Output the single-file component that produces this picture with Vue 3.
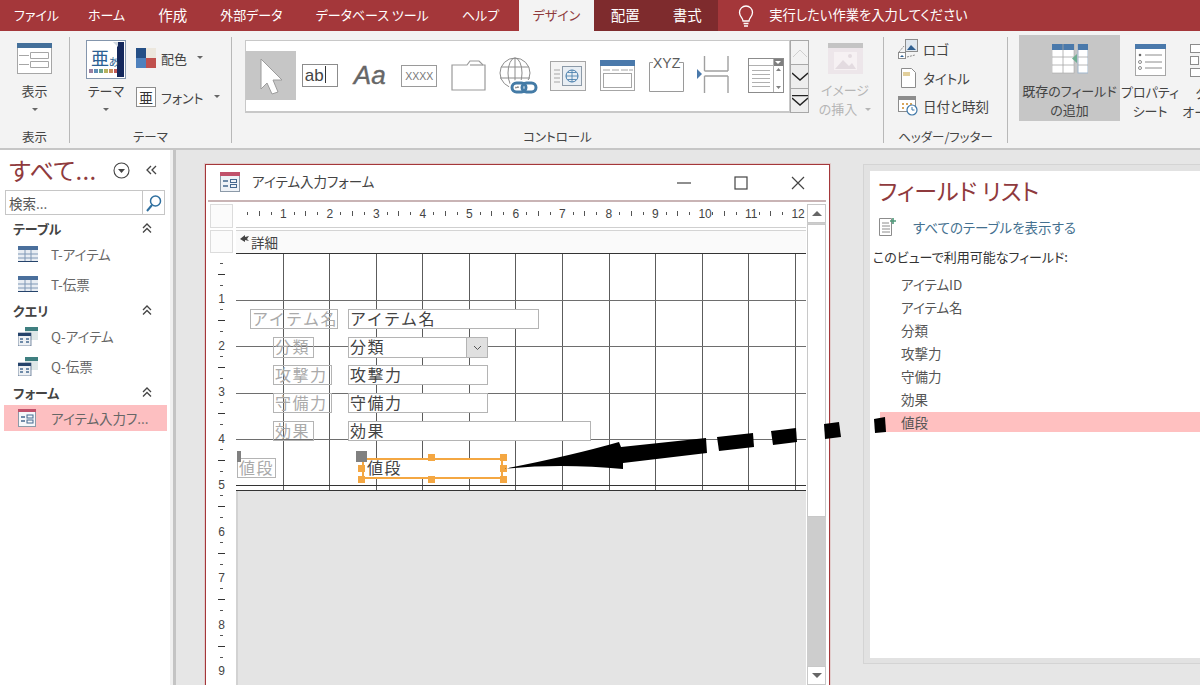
<script setup>
const tabs = ["ファイル", "ホーム", "作成", "外部データ", "データベース ツール", "ヘルプ"];
const contextTabs = ["配置", "書式"];

const navGroups = [
  { title: "テーブル", type: "table", items: ["T-アイテム", "T-伝票"] },
  { title: "クエリ", type: "query", items: ["Q-アイテム", "Q-伝票"] },
  { title: "フォーム", type: "form", items: ["アイテム入力フ..."] },
];

const fields = ["アイテムID", "アイテム名", "分類", "攻撃力", "守備力", "効果", "値段"];

const rulerCols = [1, 2, 3, 4, 5, 6, 7, 8, 9, 10, 11, 12];
const rulerRows = [1, 2, 3, 4, 5, 6, 7, 8, 9];

// design grid, origin is the top left corner of the detail section
const gridX = [47, 93, 140, 186, 233, 279, 326, 373, 419, 466, 512, 559];
const gridY = [47, 93, 140, 186];

const labels = [
  { text: "アイテム名", x: 14, y: 56, w: 88, h: 20 },
  { text: "分類", x: 37, y: 84, w: 41, h: 21 },
  { text: "攻撃力", x: 37, y: 112, w: 59, h: 20 },
  { text: "守備力", x: 37, y: 140, w: 59, h: 20 },
  { text: "効果", x: 37, y: 168, w: 41, h: 20 },
  { text: "値段", x: 1, y: 205, w: 39, h: 20 },
];
const inputs = [
  { text: "アイテム名", x: 112, y: 56, w: 191, h: 20 },
  { text: "分類", x: 112, y: 84, w: 140, h: 21, combo: true },
  { text: "攻撃力", x: 112, y: 112, w: 140, h: 20 },
  { text: "守備力", x: 112, y: 140, w: 140, h: 20 },
  { text: "効果", x: 112, y: 168, w: 243, h: 20 },
];
const handles = [
  [125, 215], [195, 204], [267, 204], [267, 215], [125, 226], [195, 226], [267, 226],
];

function box(c) {
  return { left: c.x + "px", top: c.y + "px", width: c.w + "px", height: c.h + "px" };
}
</script>

<template>
  <div class="app">
    <!-- tabs -->
    <div class="tabbar">
      <div v-for="t in tabs" :key="t" class="tab" :class="{ kanji: t === '作成' }">{{ t }}</div>
      <div class="tab active">デザイン</div>
      <div class="context-tabs">
        <div v-for="t in contextTabs" :key="t" class="tab kanji">{{ t }}</div>
      </div>
      <svg class="bulb" width="18" height="23" viewBox="0 0 18 23" fill="none" stroke="#fff" stroke-width="1.3">
        <path d="M6 16c0-3-3.500-4.500-3.500-8.500a6.500 6.500 0 0 1 13 0C15.500 11.500 12 13 12 16z" />
        <path d="M6.500 18.500h5M7 21h4" />
      </svg>
      <div class="tell-me">実行したい作業を入力してください</div>
    </div>

    <!-- ribbon -->
    <div class="ribbon">
      <div class="group g-view">
        <div class="group-body big-btn">
          <svg class="big-icon" width="35" height="31" viewBox="0 0 35 31">
            <rect x=".5" y=".5" width="34" height="30" fill="#fff" stroke="#a6a6a6" />
            <rect width="35" height="5" fill="#44709a" />
            <path d="M13.500 9.500h18v6h-18zM13.500 18.500h18v6h-18z" fill="none" stroke="#a6a6a6" />
            <path d="M2 12.500h10M2 21.500h10" stroke="#a6a6a6" />
          </svg>
          <div class="big-text">表示</div>
          <div class="caret"></div>
        </div>
        <div class="group-label">表示</div>
      </div>

      <div class="group g-theme">
        <div class="group-body theme-body">
          <div class="big-btn theme-btn">
            <svg class="theme-icon" width="40" height="39" viewBox="0 0 40 39">
              <rect x=".5" y=".5" width="39" height="38" fill="#fff" stroke="#8496ad" />
              <rect x="31" y="2" width="7" height="35" fill="#14285c" />
              <path d="M27 2h5v5z" fill="#d0d8e0" />
              <text x="5" y="25" class="svg-ja" font-size="18" fill="#2c5f93">亜</text>
              <text x="23" y="26" class="svg-ja" font-size="10" fill="#2c5f93">あ</text>
              <rect x="3" y="29" width="4" height="4" fill="#9a7fa0" />
              <rect x="8" y="29" width="4" height="4" fill="#5f8fb8" />
              <rect x="13" y="29" width="4" height="4" fill="#6aa38b" />
              <rect x="18" y="29" width="4" height="4" fill="#b7b35f" />
              <rect x="23" y="29" width="4" height="4" fill="#c98a5a" />
              <rect x="28" y="29" width="3" height="4" fill="#c05a5a" />
            </svg>
            <div class="big-text">テーマ</div>
            <div class="caret"></div>
          </div>
          <div class="theme-side">
            <div class="side-row">
              <svg width="20" height="20" viewBox="0 0 20 20">
                <rect width="10" height="10" fill="#254f86" />
                <rect x="10" width="10" height="10" fill="#ece7dd" />
                <rect y="10" width="10" height="10" fill="#4f81bd" />
                <rect x="10" y="10" width="10" height="10" fill="#c0504d" />
              </svg>
              <span>配色</span><i class="caret small"></i>
            </div>
            <div class="side-row">
              <span class="font-box">亜</span>
              <span>フォント</span><i class="caret small"></i>
            </div>
          </div>
        </div>
        <div class="group-label">テーマ</div>
      </div>

      <div class="group g-controls">
        <div class="group-body controls-body">
          <div class="gallery">
            <div class="cell selected">
              <svg width="24" height="38" viewBox="0 0 24 38">
                <path d="M2 2l21 21h-9l5 12-6 2-5-11-6 6z" fill="#fff" stroke="#9c9c9c" />
              </svg>
            </div>
            <div class="cell">
              <span class="abl">ab<i></i></span>
            </div>
            <div class="cell"><span class="aa">A<em>a</em></span></div>
            <div class="cell"><span class="xxxx">XXXX</span></div>
            <div class="cell">
              <svg width="35" height="31" viewBox="0 0 35 31" fill="#fff" stroke="#9a9a9a" stroke-width="1.200">
                <path d="M1 30V5h15l3-4h9l4 4h2v25z" />
                <path d="M19 5h13" />
              </svg>
            </div>
            <div class="cell">
              <svg width="40" height="38" viewBox="0 0 40 38" fill="none">
                <g stroke="#8c8c8c">
                  <circle cx="17" cy="16" r="15" />
                  <ellipse cx="17" cy="16" rx="7" ry="15" />
                  <path d="M3 10h28M2 21h30M17 1v30" />
                </g>
                <g stroke="#fff" stroke-width="6">
                  <rect x="14" y="26" width="14" height="9" rx="4.500" />
                  <rect x="24" y="26" width="14" height="9" rx="4.500" />
                </g>
                <g stroke="#447ba6" stroke-width="3">
                  <rect x="14" y="26" width="14" height="9" rx="4.500" />
                  <rect x="24" y="26" width="14" height="9" rx="4.500" />
                </g>
              </svg>
            </div>
            <div class="cell">
              <svg width="36" height="30" viewBox="0 0 36 30" fill="none">
                <rect x=".5" y=".5" width="35" height="29" fill="#f4f4f4" stroke="#a6a6a6" />
                <path d="M4 9h6M4 13h6M4 17h6M4 21h6" stroke="#a6a6a6" />
                <rect x="12.500" y="5.500" width="19" height="19" fill="#e8eef4" stroke="#8c9aa8" />
                <circle cx="22" cy="15" r="6" stroke="#3f78a8" />
                <path d="M16 15h12M22 9v12M18 11.500h8M18 18.500h8" stroke="#3f78a8" stroke-width=".8" />
              </svg>
            </div>
            <div class="cell">
              <svg width="35" height="31" viewBox="0 0 35 31" fill="none">
                <rect x=".5" y=".5" width="34" height="30" fill="#fff" stroke="#a6a6a6" />
                <rect width="35" height="6" fill="#4a79ab" />
                <path d="M3 10h7M12 10h7M21 10h7M29 10h4" stroke="#a6a6a6" />
                <rect x="3.500" y="13.500" width="28" height="14" stroke="#a6a6a6" />
              </svg>
            </div>
            <div class="cell">
              <svg class="xyz" width="35" height="36" viewBox="0 0 35 36" fill="none">
                <path d="M4 6.500H.5v29h34v-29H30" stroke="#9a9a9a" />
                <text x="4" y="12" class="svg-sans" font-size="14" fill="#5c5c5c">XYZ</text>
              </svg>
            </div>
            <div class="cell">
              <svg class="split" width="32" height="37" viewBox="0 0 32 37" fill="none">
                <path d="M6 14l5 5-5 5z" fill="#4a79ab" transform="translate(-6 -1)" />
                <path d="M7.500 0v15M31 0v15M7.500 15H31M7.500 37V20M31 37V20M7.500 20H31" stroke="#a0a0a0" stroke-width="1.400" />
              </svg>
            </div>
            <div class="cell">
              <svg width="36" height="35" viewBox="0 0 36 35" fill="none">
                <rect x=".5" y=".5" width="35" height="34" fill="#fff" stroke="#8c8c8c" />
                <rect x="25" y="1" width="10" height="7" fill="#7f7f7f" />
                <path d="M27 3h6l-3 3z" fill="#fff" />
                <path d="M25.500 1v33M1 7.500h24M4 12.500h18M4 16.500h18M4 20.500h18M4 24.500h18M4 28.500h18" stroke="#b0b0b0" />
                <path d="M28 13h5l-2.500-3zM28 28h5l-2.500 3z" fill="#7f7f7f" />
              </svg>
            </div>
          </div>
          <div class="gallery-scroll">
            <div class="gs-btn disabled">
              <svg width="14" height="8" viewBox="0 0 14 8" fill="none" stroke="#d0d0d0"><path d="M0 8l7-7 7 7" /></svg>
            </div>
            <div class="gs-btn">
              <svg width="16" height="9" viewBox="0 0 16 9" fill="none" stroke="#222" stroke-width="1.400"><path d="M0 1l8 7 8-7" /></svg>
            </div>
            <div class="gs-btn">
              <svg width="16" height="11" viewBox="0 0 16 11" fill="none" stroke="#222" stroke-width="1.400"><path d="M0 .5h16M0 3l8 7 8-7" /></svg>
            </div>
          </div>
          <div class="insert-image">
            <svg width="35" height="31" viewBox="0 0 35 31">
              <rect width="35" height="31" fill="#ede6ea" />
              <rect width="35" height="5" fill="#c4c4c4" />
              <rect x="6" y="9" width="23" height="18" fill="#f6f1f3" />
              <path d="M7 26l8-9 6 6 3-3 4 6z" fill="#e3dbe0" />
              <circle cx="22" cy="13" r="2" fill="#e3dbe0" />
            </svg>
            <div class="insert-text">イメージ</div>
            <div class="insert-text">の挿入 <i class="caret small pale"></i></div>
          </div>
        </div>
        <div class="group-label">コントロール</div>
      </div>

      <div class="group g-header">
        <div class="group-body header-body">
          <div class="head-row">
            <svg width="20" height="20" viewBox="0 0 20 20" fill="none">
              <path d="M1 13l5-6M9 18l8-2" stroke="#8c8c8c" stroke-dasharray="2 1" />
              <rect x="7.500" y=".5" width="12" height="12" fill="#dfe7ef" stroke="#8c8c8c" />
              <path d="M9 11l4-5 3 3 2 2z" fill="#2f5f90" />
              <rect x=".5" y="13.500" width="7" height="6" fill="#fff" stroke="#8c8c8c" />
              <path d="M2 18l2-2 2 2z" fill="#2f5f90" />
            </svg>
            <span>ロゴ</span>
          </div>
          <div class="head-row">
            <svg width="20" height="20" viewBox="0 0 20 20" fill="none">
              <path d="M3.500.5h10l4 4v15h-14z" fill="#fff" stroke="#8c8c8c" />
              <rect x="5" y="4" width="7" height="4" fill="#e2cf9b" />
            </svg>
            <span>タイトル</span>
          </div>
          <div class="head-row">
            <svg width="20" height="20" viewBox="0 0 20 20" fill="none">
              <rect x=".5" y=".5" width="17" height="15" fill="#fff" stroke="#8c8c8c" />
              <rect x="1" y="1" width="16" height="3" fill="#8c8c8c" />
              <path d="M4 7h2v2H4zM8 7h2v2H8zM12 7h2v2h-2zM4 11h2v2H4z" fill="#d8a55a" />
              <circle cx="14" cy="14" r="5" fill="#fff" stroke="#3f78a8" stroke-width="1.200" />
              <path d="M14 11v3h2.500" stroke="#3f78a8" />
            </svg>
            <span>日付と時刻</span>
          </div>
        </div>
        <div class="group-label">ヘッダー/フッター</div>
      </div>

      <div class="group g-tools">
        <div class="tool add-field">
          <svg width="36" height="30" viewBox="0 0 36 30">
            <rect x="0" y="0" width="22" height="29" fill="#fff" stroke="#a6a6a6" stroke-width=".6" />
            <rect width="22" height="6" fill="#4a79ab" />
            <path d="M0 13h22M0 21h22M11 0v29" stroke="#a6a6a6" stroke-width=".8" />
            <rect x="26" y="0" width="10" height="29" fill="#fff" stroke="#9fb6cc" />
            <rect x="26" width="10" height="6" fill="#4a79ab" />
            <path d="M26 13h10M26 21h10" stroke="#a6a6a6" stroke-width=".8" />
            <path d="M25 10v9l-5-4.500z" fill="#6fae92" />
          </svg>
          <div class="tool-text">既存のフィールド<br />の追加</div>
        </div>
        <div class="tool props">
          <svg width="31" height="32" viewBox="0 0 31 32" fill="none">
            <rect x=".5" y=".5" width="30" height="31" fill="#fff" stroke="#a6a6a6" />
            <rect width="31" height="5" fill="#4a79ab" />
            <path d="M10 11h17M10 18h17M10 24h17" stroke="#8c8c8c" />
            <circle cx="5" cy="11" r="1.300" fill="#666" />
            <circle cx="5" cy="18" r="1.500" stroke="#8c8c8c" />
            <circle cx="5" cy="24" r="1.500" stroke="#8c8c8c" />
          </svg>
          <div class="tool-text">プロパティ<br />シート</div>
        </div>
        <div class="tool order">
          <svg width="30" height="33" viewBox="0 0 30 33" fill="none" stroke="#8c8c8c">
            <rect x=".5" y=".5" width="29" height="8" fill="#fff" />
            <rect x=".5" y="12.500" width="8" height="8" fill="#fff" />
            <rect x=".5" y="24.500" width="29" height="8" fill="#fff" />
          </svg>
          <div class="tool-text">タブ<br />オーダー</div>
        </div>
      </div>
    </div>

    <div class="main">
      <!-- navigation pane -->
      <aside class="nav">
        <div class="nav-head">
          <span class="nav-title">すべて...</span>
          <svg class="nav-circle" width="17" height="17" viewBox="0 0 17 17" fill="none">
            <circle cx="8.500" cy="8.500" r="7.500" stroke="#444" stroke-width="1.100" />
            <path d="M5 7h7l-3.500 4z" fill="#444" />
          </svg>
          <svg class="nav-collapse" width="12" height="10" viewBox="0 0 12 10" fill="none" stroke="#444" stroke-width="1.300">
            <path d="M5 1L1 5l4 4M10 1L6 5l4 4" />
          </svg>
        </div>
        <div class="search">
          <span class="search-text">検索...</span>
          <div class="search-btn">
            <svg width="17" height="18" viewBox="0 0 17 18" fill="none" stroke="#2f6f9f" stroke-width="1.500">
              <circle cx="10.500" cy="7" r="5" />
              <path d="M7 11l-5 6" stroke-width="2" />
            </svg>
          </div>
        </div>
        <template v-for="g in navGroups" :key="g.title">
          <div class="nav-group">
            <span>{{ g.title }}</span>
            <svg width="10" height="10" viewBox="0 0 10 10" fill="none" stroke="#444" stroke-width="1.300">
              <path d="M1 5l4-4 4 4M1 9.500l4-4 4 4" />
            </svg>
          </div>
          <div v-for="item in g.items" :key="item" class="nav-item" :class="{ selected: g.type === 'form' }">
            <svg v-if="g.type === 'table'" width="20" height="16" viewBox="0 0 20 16">
              <rect width="20" height="16" fill="#e8edf3" />
              <rect width="20" height="4" fill="#4a6f9c" />
              <path d="M0 8h20M0 12h20M7 4v12M13 4v12" stroke="#7f97b5" />
              <rect y="15" width="20" height="1" fill="#25436b" />
            </svg>
            <svg v-else-if="g.type === 'query'" width="20" height="19" viewBox="0 0 20 19">
              <rect x="7" y="0" width="13" height="13" fill="#dfe8e8" />
              <rect x="7" y="0" width="13" height="4" fill="#3f7f80" />
              <rect x="0" y="6" width="13" height="13" fill="#eef1f4" stroke="#25436b" stroke-width=".6" />
              <rect x="0" y="6" width="13" height="3" fill="#25436b" />
              <path d="M2 12h3M8 12h3M2 15h3M8 15h3" stroke="#44688f" stroke-width="1.300" />
            </svg>
            <svg v-else width="18" height="18" viewBox="0 0 18 18" fill="none">
              <rect x=".5" y=".5" width="17" height="17" fill="#f5f7fa" stroke="#8c9aa8" />
              <rect width="18" height="3" fill="#c0506a" />
              <path d="M3 8h4M3 12h4" stroke="#44688f" stroke-width="1.300" />
              <rect x="9" y="6" width="6" height="3" stroke="#44688f" />
              <rect x="9" y="11" width="6" height="3" stroke="#44688f" />
            </svg>
            <span>{{ item }}</span>
          </div>
        </template>
      </aside>
      <div class="nav-split"></div>

      <div class="workspace">
        <!-- form window -->
        <section class="form-window">
          <header class="win-title">
            <svg width="20" height="20" viewBox="0 0 20 20" fill="none">
              <rect x=".5" y=".5" width="19" height="19" fill="#eef2f7" stroke="#8c9aa8" />
              <rect width="20" height="4" fill="#c0506a" />
              <path d="M3 9h5M3 14h5" stroke="#44688f" stroke-width="1.300" />
              <rect x="10.500" y="7.500" width="6" height="3" stroke="#44688f" />
              <rect x="10.500" y="12.500" width="6" height="3" stroke="#44688f" />
            </svg>
            <span class="win-name">アイテム入力フォーム</span>
            <div class="win-btns">
              <svg width="14" height="14" viewBox="0 0 14 14" stroke="#444" stroke-width="1.200"><path d="M0 7h14" /></svg>
              <svg width="14" height="14" viewBox="0 0 14 14" fill="none" stroke="#444" stroke-width="1.200"><rect x="1" y="1" width="12" height="12" /></svg>
              <svg width="14" height="14" viewBox="0 0 14 14" stroke="#444" stroke-width="1.200"><path d="M1 1l12 12M13 1L1 13" /></svg>
            </div>
          </header>

          <div class="designer">
            <div class="left-col">
              <div class="corner first"></div>
              <div class="corner"></div>
              <div class="v-ruler">
                <div v-for="r in rulerRows" :key="r" class="v-cell">
                  <i class="dot"></i><i class="dash"></i><i class="dot"></i><b>{{ r }}</b>
                </div>
              </div>
            </div>

            <div class="center-col">
              <div class="h-ruler">
                <div v-for="c in rulerCols" :key="c" class="h-cell">
                  <i class="tick"></i><i class="bar"></i><i class="tick"></i><b>{{ c }}</b>
                </div>
              </div>
              <div class="section-band">
                <svg width="10" height="8" viewBox="0 0 10 8"><path d="M0 4l5-4v2l4-1-2 3 2 2-4-1v2z" fill="#444" /></svg>
                <span>詳細</span>
              </div>

              <!-- design surface, the controls sit on free coordinates -->
              <div class="surface">
                <svg class="grid-lines" width="570" height="238" viewBox="0 0 570 238">
                  <path v-for="x in gridX" :key="x" :d="`M${x + 0.5} 0V238`" stroke="#5c5c5c" />
                  <path v-for="y in gridY" :key="y" :d="`M0 ${y + 0.5}H570`" stroke="#6e6e6e" />
                  <path d="M0 .5H570M0 232.500H570M0 237.500H570" stroke="#333" />
                </svg>
                <div v-for="l in labels" :key="'l' + l.text" class="ctl label" :style="box(l)">{{ l.text }}</div>
                <div v-for="i in inputs" :key="'i' + i.text" class="ctl input" :style="box(i)">
                  {{ i.text }}
                  <span v-if="i.combo" class="combo-btn">
                    <svg width="9" height="6" viewBox="0 0 9 6" fill="none" stroke="#555"><path d="M1 1l3.500 3.500L8 1" /></svg>
                  </span>
                </div>
                <div class="ctl picked">値段</div>
                <i class="grab big"></i>
                <i class="grab thin"></i>
                <i v-for="h in handles" :key="h.join()" class="handle" :style="{ left: h[0] - 3 + 'px', top: h[1] - 3 + 'px' }"></i>
              </div>
              <div class="below"></div>
            </div>

            <div class="v-scroll">
              <div class="sb-btn"><i class="up"></i></div>
              <div class="sb-thumb"></div>
              <div class="sb-track"></div>
              <div class="sb-btn down"><i class="dn"></i></div>
            </div>
          </div>
        </section>

        <!-- field list -->
        <section class="field-list">
          <h2>フィールド リスト</h2>
          <div class="show-all">
            <svg width="18" height="18" viewBox="0 0 18 18" fill="none">
              <path d="M.5.5h12v17H.5z" fill="#fff" stroke="#8c8c8c" />
              <path d="M3 5h7M3 8h8M3 11h8M3 14h8" stroke="#8c8c8c" />
              <path d="M14 0v6M11 3h6" stroke="#4f9a7a" stroke-width="1.600" />
            </svg>
            <span>すべてのテーブルを表示する</span>
          </div>
          <div class="avail">このビューで利用可能なフィールド:</div>
          <ul>
            <li v-for="f in fields" :key="f" :class="{ hit: f === '値段' }">{{ f }}</li>
          </ul>
        </section>
      </div>
    </div>

    <!-- hand drawn arrow laid over the screenshot -->
    <svg class="arrow" width="1200" height="685" viewBox="0 0 1200 685">
      <path d="M503 469Q570 456 619 442L621 447L706 438L707 453L623 463L623 469Q560 463 503 469z" />
      <path d="M717 437L753 433L754 447L719 451z" />
      <path d="M771 431L796 428L797 442L773 445z" />
      <path d="M824 424L839 422L841 437L825 439z" />
      <path d="M874 419L885 417L886 432L875 433z" />
    </svg>
  </div>
</template>

<style>
html,
body {
  margin: 0;
  overflow: hidden;
}
</style>

<style scoped>
.app {
  position: relative;
  width: 1200px;
  height: 685px;
  overflow: hidden;
  display: flex;
  flex-direction: column;
  background: #e6e6e6;
  color: #444;
  font-family: "Noto Sans CJK JP", "Noto Sans", sans-serif;
  font-size: 13px;
  font-feature-settings: "palt";
}

.svg-ja {
  font-family: "Noto Sans CJK JP", sans-serif;
}
.svg-sans {
  font-family: "Liberation Sans", sans-serif;
}

/* tabs */
.tabbar {
  flex: none;
  height: 31px;
  display: flex;
  align-items: stretch;
  background: #a4373a;
  color: #fff;
  font-size: 13px;
  line-height: 30px;
}
.tab {
  padding: 0 16.500px;
  white-space: nowrap;
}
.tab.kanji {
  font-size: 14.500px;
}
.tab:first-child {
  padding: 0 12.500px 0 14px;
}
.tab:nth-child(6) {
  padding-right: 19.500px;
}
.tab.active {
  background: #f3f3f3;
  color: #8f3a3d;
  padding: 0 14px;
}
.context-tabs {
  display: flex;
  background: #7e2b2d;
}
.context-tabs .tab:first-child {
  padding: 0 16.500px;
}
.bulb {
  margin: 2px 0 0 19px;
  align-self: center;
}
.tell-me {
  margin-left: 14px;
  font-size: 13.300px;
}

/* ribbon */
.ribbon {
  flex: none;
  height: 119px;
  box-sizing: border-box;
  display: flex;
  background: #f3f3f3;
  border-bottom: 2px solid #c6c6c6;
  padding-top: 6px;
}
.group {
  flex: none;
  height: 106px;
  display: flex;
  flex-direction: column;
  box-sizing: border-box;
  border-right: 1px solid #b8b8b8;
}
.group-body {
  flex: 1;
  min-height: 0;
}
.group-label {
  height: 12px;
  line-height: 12px;
  text-align: center;
  font-size: 12.500px;
  color: #444;
}
.g-view {
  width: 70px;
}
.g-theme {
  width: 162px;
}
.g-controls {
  width: 652px;
}
.g-header {
  width: 124px;
}
.g-tools {
  flex: 1;
  flex-direction: row;
  border: 0;
  margin-top: -2px;
  padding-left: 11px;
  height: 86px;
}

.big-btn {
  display: flex;
  flex-direction: column;
  align-items: center;
}
.g-view .big-icon {
  margin-top: 6px;
}
.big-text {
  line-height: 18px;
  margin-top: 8px;
}
.caret {
  width: 0;
  height: 0;
  border: 3px solid transparent;
  border-top-color: #666;
  border-bottom: 0;
  margin-top: 8px;
}
.caret.small {
  display: inline-block;
  margin: 0 0 2px 5px;
  vertical-align: middle;
}
.caret.pale {
  border-top-color: #b5b5b5;
}
.theme-body {
  display: flex;
}
.theme-btn {
  width: 40px;
  margin-left: 16px;
}
.theme-icon {
  margin-top: 3px;
}
.theme-btn .big-text {
  margin-top: 3px;
  white-space: nowrap;
}
.theme-side {
  margin-left: 10px;
  padding-top: 11px;
  display: flex;
  flex-direction: column;
  gap: 19px;
}
.side-row {
  height: 20px;
  display: flex;
  align-items: center;
  gap: 5px;
  white-space: nowrap;
}
.font-box {
  width: 18px;
  height: 18px;
  border: 1px solid #8c8c8c;
  background: #fff;
  display: flex;
  align-items: center;
  justify-content: center;
  font-size: 14px;
  color: #333;
}

.controls-body {
  display: flex;
  padding: 3px 0 0 13px;
  box-sizing: border-box;
}
.gallery {
  width: 545px;
  height: 73px;
  box-sizing: border-box;
  border: 1px solid #c8c8c8;
  border-width: 1px 1px 2px 1px;
  background: #fff;
  display: flex;
  align-items: center;
  padding-bottom: 1px;
}
.cell {
  flex: none;
  width: 49.500px;
  height: 49px;
  display: flex;
  align-items: center;
  justify-content: center;
}
.cell.selected {
  background: #c6c6c6;
}
.abl {
  display: block;
  width: 32px;
  height: 21px;
  margin-left: -1px;
  padding-left: 2px;
  border: 1px solid #8c8c8c;
  font-family: "Liberation Sans", sans-serif;
  font-size: 17px;
  line-height: 21px;
  color: #444;
}
.abl i {
  display: inline-block;
  width: 1px;
  height: 17px;
  margin-left: 1px;
  background: #333;
  vertical-align: -2px;
}
.aa {
  font-family: "Liberation Sans", sans-serif;
  font-style: italic;
  font-size: 26px;
  color: #666;
  -webkit-text-stroke: 0.4px #666;
}
.aa em {
  font-style: italic;
}
.xxxx {
  width: 34px;
  height: 20px;
  border: 1px solid #9a9a9a;
  font-family: "Liberation Sans", sans-serif;
  font-size: 10.500px;
  line-height: 20px;
  text-align: center;
  color: #777;
}
.xyz {
  margin-top: -3px;
}
.split {
  margin: -3px 0 0 -6px;
}
.gallery-scroll {
  width: 19px;
  height: 73px;
  display: flex;
  flex-direction: column;
  box-sizing: border-box;
  border: 1px solid #a8a8a8;
  background: #ededed;
}
.gallery-scroll .gs-btn {
  flex: 1;
  display: flex;
  align-items: center;
  justify-content: center;
  border-bottom: 1px solid #a8a8a8;
}
.gallery-scroll .gs-btn:last-child {
  border-bottom: 0;
}
.gs-btn.disabled {
  background: #f3f3f3;
}
.insert-image {
  width: 52px;
  margin-top: 3px;
  margin-left: 10px;
  display: flex;
  flex-direction: column;
  align-items: center;
  color: #b5b5b5;
  white-space: nowrap;
}
.insert-text {
  line-height: 19px;
}
.insert-image svg {
  margin-bottom: 6px;
}
.header-body {
  padding: 2px 0 0 14px;
  display: flex;
  flex-direction: column;
  gap: 8.500px;
}
.head-row {
  height: 20px;
  display: flex;
  align-items: center;
  gap: 5px;
  font-size: 13.500px;
  white-space: nowrap;
}
.tool {
  flex: none;
  display: flex;
  flex-direction: column;
  align-items: center;
  white-space: nowrap;
  box-sizing: border-box;
  padding-top: 9px;
  height: 86px;
}
.tool-text {
  margin-top: 6px;
  line-height: 19px;
  text-align: center;
  font-size: 13px;
}
.add-field {
  width: 101px;
  background: #c6c6c6;
}
.add-field .tool-text {
  margin-top: 7px;
}
.props {
  width: 60px;
}
.order {
  margin-left: 2px;
  width: 50px;
}
.order svg {
  align-self: flex-start;
  margin-left: 8px;
}

/* navigation */
.main {
  flex: 1;
  min-height: 0;
  display: flex;
}
.nav {
  flex: none;
  width: 170px;
  background: #fff;
  padding: 0 3px 0 5px;
  box-sizing: border-box;
}
.nav-split {
  flex: none;
  width: 6px;
  box-sizing: border-box;
  background: #f0f0f0;
  border-right: 3px solid #c4c4c4;
}
.nav-head {
  height: 40px;
  display: flex;
  align-items: center;
}
.nav-title {
  margin-left: 4px;
  font-size: 24px;
  line-height: 36px;
  letter-spacing: 0.300px;
  color: #8f3a3d;
  width: 104px;
  white-space: nowrap;
}
.nav-collapse {
  margin-left: 16px;
}
.search {
  height: 25px;
  width: 160px;
  margin-bottom: 2px;
  box-sizing: border-box;
  border: 1px solid #c6c6c6;
  display: flex;
  align-items: center;
  font-size: 13.500px;
  color: #555;
}
.search-text {
  flex: 1;
  padding-left: 3px;
}
.search-btn {
  width: 21px;
  height: 23px;
  border-left: 1px solid #c6c6c6;
  display: flex;
  align-items: center;
  justify-content: center;
}
.nav-group {
  width: 160px;
  height: 22px;
  display: flex;
  align-items: center;
  justify-content: space-between;
  padding: 0 13px 0 8px;
  box-sizing: border-box;
  font-weight: 700;
  font-size: 13px;
  color: #444;
}
.nav-item {
  width: 163px;
  margin-left: -1px;
  height: 30px;
  display: grid;
  grid-template-columns: 33px 1fr;
  align-items: center;
  padding-left: 14px;
  box-sizing: border-box;
  color: #666;
  font-size: 13.500px;
  white-space: nowrap;
}
.nav-item.selected {
  height: 26px;
  background: #fdbfc1;
  margin-top: 2px;
}

/* workspace */
.workspace {
  flex: 1;
  min-width: 0;
  display: flex;
  align-items: flex-start;
  padding: 14px 0 0 29px;
  overflow: hidden;
}
.form-window {
  flex: none;
  width: 625px;
  height: 560px;
  box-sizing: border-box;
  background: #fff;
  border: 1px solid #a4373a;
  box-shadow: 0 0 0 1px #e2cdcd;
}
.win-title {
  height: 35px;
  box-sizing: content-box;
  display: flex;
  align-items: center;
  padding: 0 0 0 12px;
  border-bottom: 2px solid #c9b4b5;
  margin: 0 3px 0 2px;
}
.win-name {
  margin: -3px 0 0 12px;
  font-size: 13.500px;
  color: #444;
}
.win-title > svg:first-child {
  margin-top: -1px;
}
.win-btns {
  margin-left: auto;
  display: flex;
  gap: 43px;
  padding-right: 21px;
}
.designer {
  display: flex;
  padding: 2px 0 0 4px;
  height: 500px;
  overflow: hidden;
}
.left-col {
  flex: none;
  width: 23px;
  margin-right: 3px;
}
.corner {
  height: 23px;
  border: 1px solid #dcdcdc;
  box-sizing: border-box;
  background: #fbfbfb;
}
.corner.first {
  height: 24px;
  margin-bottom: 2px;
}
.v-ruler {
  padding-top: 5px;
}
.v-cell {
  height: 46.500px;
  display: grid;
  grid-template-rows: repeat(4, 1fr);
  justify-items: center;
  align-items: center;
  font-size: 12px;
  color: #444;
}
.v-cell b {
  font-weight: 400;
  font-family: "Liberation Sans", sans-serif;
  line-height: 10px;
  margin-top: 4px;
}
.dot {
  width: 3px;
  height: 1px;
  background: #555;
}
.dash {
  width: 7px;
  height: 1px;
  background: #333;
}
.center-col {
  flex: none;
  width: 570px;
}
.h-ruler {
  height: 24px;
  margin-bottom: 2px;
  box-sizing: border-box;
  padding-left: 6px;
  display: flex;
  border-bottom: 1px solid #cfcfcf;
  white-space: nowrap;
}
.h-cell {
  flex: none;
  width: 46.500px;
  display: grid;
  grid-template-columns: repeat(4, 11.625px);
  justify-items: center;
  align-items: center;
  font-size: 12px;
  color: #444;
  height: 19px;
}
.h-cell b {
  font-weight: 400;
  font-family: "Liberation Sans", sans-serif;
  justify-self: start;
  margin-left: 3px;
}
.tick {
  width: 1px;
  height: 3px;
  background: #555;
}
.bar {
  width: 1px;
  height: 5px;
  background: #555;
}
.section-band {
  height: 23px;
  box-sizing: border-box;
  background: #fafafa;
  border-top: 1px solid #d4d4d4;
  padding-left: 4px;
  display: flex;
  align-items: center;
  gap: 1px;
  font-size: 13.500px;
  color: #444;
}
.section-band svg {
  margin-top: -6px;
}
.surface {
  position: relative;
  height: 238px;
  background: #fff;
}
.grid-lines {
  display: block;
}
.ctl {
  position: absolute;
  box-sizing: border-box;
  border: 1px solid #b4b4b4;
  font-size: 16px;
  line-height: 16px;
  letter-spacing: 1.500px;
  white-space: nowrap;
  padding-left: 1px;
  font-feature-settings: normal;
}
.label {
  color: #aaa;
}
.input {
  background: #fff;
  color: #444;
}
.combo-btn {
  position: absolute;
  right: -1px;
  top: -1px;
  width: 22px;
  height: 21px;
  box-sizing: border-box;
  background: #e0e0e0;
  border: 1px solid #b4b4b4;
  display: flex;
  align-items: center;
  justify-content: center;
}
.picked {
  left: 126px;
  top: 205px;
  width: 141px;
  height: 21px;
  background: #fff;
  border: 2px solid #f4a742;
  color: #444;
  padding-left: 3px;
  line-height: 15px;
}
.grab {
  position: absolute;
  background: #808080;
}
.grab.big {
  left: 120px;
  top: 198px;
  width: 11px;
  height: 11px;
}
.grab.thin {
  left: 1px;
  top: 198px;
  width: 4px;
  height: 11px;
}
.handle {
  position: absolute;
  width: 7px;
  height: 7px;
  background: #f4a742;
}
.below {
  height: 300px;
  background: #e4e4e4;
  border-left: 2px solid #d2d2d2;
  box-sizing: border-box;
}
.v-scroll {
  flex: none;
  width: 19px;
  margin-left: 1px;
  display: flex;
  flex-direction: column;
  height: 481px;
  background: #cdcdcd;
}
.sb-btn {
  flex: none;
  height: 19px;
  background: #fff;
  border: 1px solid #c8c8c8;
  box-sizing: border-box;
  display: flex;
  align-items: center;
  justify-content: center;
}
.sb-btn .up,
.sb-btn .dn {
  width: 0;
  height: 0;
  border: 5px solid transparent;
}
.sb-btn .up {
  border-bottom: 5px solid #666;
  border-top: 0;
}
.sb-btn .dn {
  border-top: 5px solid #666;
  border-bottom: 0;
}
.sb-thumb {
  flex: none;
  height: 293px;
  margin-top: 1px;
  background: #fff;
  border: 1px solid #c8c8c8;
  box-sizing: border-box;
}
.sb-track {
  flex: 1;
}

/* field list */
.field-list {
  flex: none;
  margin: 1px 0 0 34px;
  width: 340px;
  height: 498px;
  box-sizing: border-box;
  background: #fff;
  border: solid #e2e2e2;
  border-width: 6px 0 5px 6px;
  box-shadow: 0 0 0 1px #d4d4d4;
}
.field-list h2 {
  margin: 0;
  padding: 0 0 0 8px;
  font-size: 23px;
  font-weight: 400;
  line-height: 38px;
  color: #8f3a3d;
  white-space: nowrap;
}
.show-all {
  margin: 8px 0 0 9px;
  height: 20px;
  display: flex;
  align-items: center;
  gap: 16px;
  color: #44708f;
  font-size: 13.500px;
}
.avail {
  margin: 9px 0 0 3px;
  line-height: 22px;
  font-size: 13px;
  color: #333;
}
.field-list ul {
  list-style: none;
  margin: 5px 0 0 0;
  padding: 0;
}
.field-list li {
  height: 23px;
  line-height: 23px;
  padding-left: 31px;
  font-size: 13.500px;
  color: #555;
}
.field-list li.hit {
  background: linear-gradient(#ffc0c0, #ffc0c0) 10px 1px / 100% 20px no-repeat;
}

.arrow {
  position: absolute;
  left: 0;
  top: 0;
  pointer-events: none;
}
</style>
